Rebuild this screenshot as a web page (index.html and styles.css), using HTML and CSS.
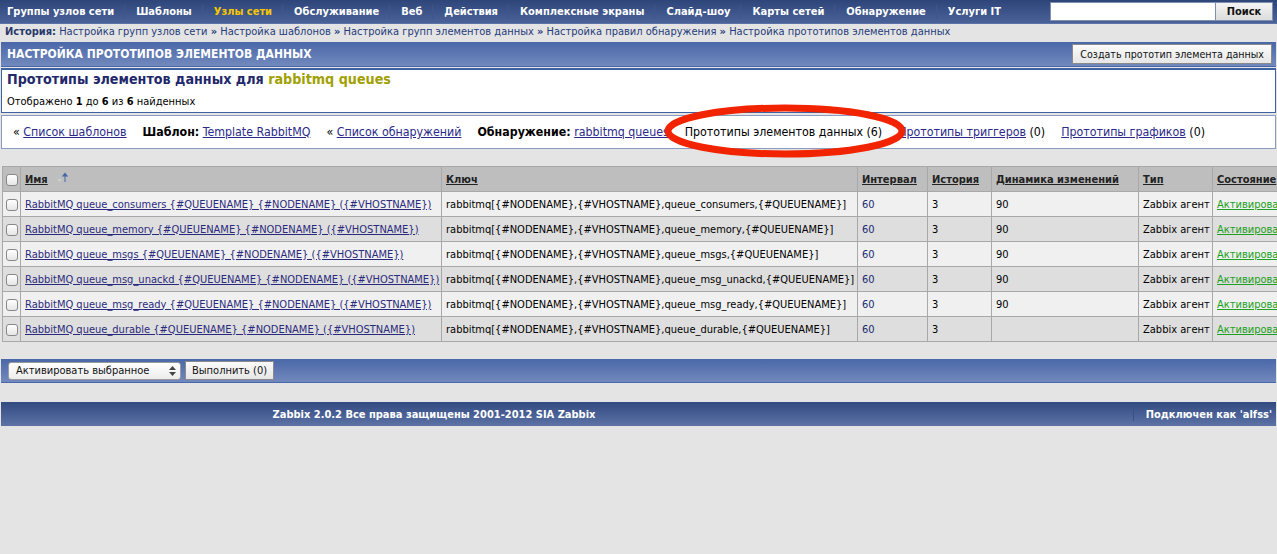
FILE: index.html
```html
<!DOCTYPE html>
<html lang="ru">
<head>
<meta charset="utf-8">
<title>Настройка прототипов элементов данных</title>
<link rel="stylesheet" href="styles.css">
</head>
<body>
<div class="topnav">
  <ul class="menu">
    <li>Группы узлов сети</li>
    <li>Шаблоны</li>
    <li class="sel">Узлы сети</li>
    <li>Обслуживание</li>
    <li>Веб</li>
    <li>Действия</li>
    <li>Комплексные экраны</li>
    <li>Слайд-шоу</li>
    <li>Карты сетей</li>
    <li>Обнаружение</li>
    <li>Услуги IT</li>
  </ul>
  <div class="search"><span class="search-input"></span><span class="search-btn">Поиск</span></div>
</div>
<div class="history"><b>История:</b> <a>Настройка групп узлов сети</a> <span class="rq">»</span> <a>Настройка шаблонов</a> <span class="rq">»</span> <a>Настройка групп элементов данных</a> <span class="rq">»</span> <a>Настройка правил обнаружения</a> <span class="rq">»</span> <a>Настройка прототипов элементов данных</a></div>
<div class="hdr">
  <span class="hdr-title">НАСТРОЙКА ПРОТОТИПОВ ЭЛЕМЕНТОВ ДАННЫХ</span>
  <span class="btn create">Создать прототип элемента данных</span>
</div>
<div class="box titlebox">
  <div class="title">Прототипы элементов данных для <span class="olive">rabbitmq queues</span></div>
  <div class="count">Отображено <b>1</b> до <b>6</b> из <b>6</b> найденных</div>
</div>
<div class="box crumbs">
  <span class="crumb">« <a>Список шаблонов</a></span>
  <span class="crumb"><b>Шаблон:</b> <a>Template RabbitMQ</a></span>
  <span class="crumb">« <a>Список обнаружений</a></span>
  <span class="crumb"><b>Обнаружение:</b> <a>rabbitmq queues</a></span>
  <span class="crumb">Прототипы элементов данных (6)</span>
  <span class="crumb"><a>Прототипы триггеров</a> (0)</span>
  <span class="crumb"><a>Прототипы графиков</a> (0)</span>
</div>
<table class="list">
  <colgroup>
    <col class="c-chk"><col class="c-name"><col class="c-key"><col class="c-int"><col class="c-hist"><col class="c-trend"><col class="c-type"><col class="c-stat">
  </colgroup>
  <thead>
    <tr>
      <th><span class="cb"></span></th>
      <th><a>Имя</a><svg class="sort" width="13" height="13" viewBox="0 0 13 13"><path d="M3.5 12.5V8H1.5L3.5 11L5.5 8H3.5" fill="#d0d0d0"/><path d="M8.5 11V5.5H5.8L9 1.5L12.2 5.5H9.5V11Z" fill="#4866a6"/></svg></th>
      <th><a>Ключ</a></th>
      <th><a>Интервал</a></th>
      <th><a>История</a></th>
      <th><a>Динамика изменений</a></th>
      <th><a>Тип</a></th>
      <th><a>Состояние</a></th>
    </tr>
  </thead>
  <tbody>
    <tr class="odd"><td><span class="cb"></span></td><td><a>RabbitMQ queue_consumers {#QUEUENAME} {#NODENAME} ({#VHOSTNAME})</a></td><td>rabbitmq[{#NODENAME},{#VHOSTNAME},queue_consumers,{#QUEUENAME}]</td><td class="n">60</td><td>3</td><td>90</td><td>Zabbix агент</td><td><a class="on">Активировано</a></td></tr>
    <tr class="even"><td><span class="cb"></span></td><td><a>RabbitMQ queue_memory {#QUEUENAME} {#NODENAME} ({#VHOSTNAME})</a></td><td>rabbitmq[{#NODENAME},{#VHOSTNAME},queue_memory,{#QUEUENAME}]</td><td class="n">60</td><td>3</td><td>90</td><td>Zabbix агент</td><td><a class="on">Активировано</a></td></tr>
    <tr class="odd"><td><span class="cb"></span></td><td><a>RabbitMQ queue_msgs {#QUEUENAME} {#NODENAME} ({#VHOSTNAME})</a></td><td>rabbitmq[{#NODENAME},{#VHOSTNAME},queue_msgs,{#QUEUENAME}]</td><td class="n">60</td><td>3</td><td>90</td><td>Zabbix агент</td><td><a class="on">Активировано</a></td></tr>
    <tr class="even"><td><span class="cb"></span></td><td><a>RabbitMQ queue_msg_unackd {#QUEUENAME} {#NODENAME} ({#VHOSTNAME})</a></td><td>rabbitmq[{#NODENAME},{#VHOSTNAME},queue_msg_unackd,{#QUEUENAME}]</td><td class="n">60</td><td>3</td><td>90</td><td>Zabbix агент</td><td><a class="on">Активировано</a></td></tr>
    <tr class="odd"><td><span class="cb"></span></td><td><a>RabbitMQ queue_msg_ready {#QUEUENAME} {#NODENAME} ({#VHOSTNAME})</a></td><td>rabbitmq[{#NODENAME},{#VHOSTNAME},queue_msg_ready,{#QUEUENAME}]</td><td class="n">60</td><td>3</td><td>90</td><td>Zabbix агент</td><td><a class="on">Активировано</a></td></tr>
    <tr class="even"><td><span class="cb"></span></td><td><a>RabbitMQ queue_durable {#QUEUENAME} {#NODENAME} ({#VHOSTNAME})</a></td><td>rabbitmq[{#NODENAME},{#VHOSTNAME},queue_durable,{#QUEUENAME}]</td><td class="n">60</td><td>3</td><td></td><td>Zabbix агент</td><td><a class="on">Активировано</a></td></tr>
  </tbody>
</table>
<div class="actions">
  <span class="select">Активировать выбранное<svg class="updown" width="7" height="10" viewBox="0 0 7 10"><path d="M3.5 0L7 4H0Z M3.5 10L0 6H7Z" fill="#444"/></svg></span>
  <span class="btn go">Выполнить (0)</span>
</div>
<div class="footer">
  <span class="foot-main">Zabbix 2.0.2 Все права защищены 2001-2012 SIA Zabbix</span>
  <span class="foot-user">Подключен как 'alfss'</span>
</div>
<svg class="annot" width="252" height="60" viewBox="0 0 252 60"><ellipse cx="126" cy="30" rx="117" ry="23" fill="none" stroke="#f22400" stroke-width="7"/></svg>
</body>
</html>
```

FILE: styles.css
```css
html, body {
  margin: 0;
  padding: 0;
  overflow: hidden;
}
body {
  background: #e4e4e4;
  font-family: "DejaVu Sans Condensed", "DejaVu Sans", sans-serif;
  font-size: 11px;
  color: #000;
  position: relative;
  width: 1277px;
  height: 554px;
}
a { text-decoration: underline; cursor: pointer; }

.topnav {
  height: 24px;
  display: flex;
  align-items: center;
  justify-content: space-between;
  background: linear-gradient(#2d4579, #4a6298);
  border-bottom: 1px solid #5a72a8;
  box-sizing: border-box;
}
.menu {
  list-style: none;
  margin: 0;
  padding: 0;
  display: flex;
}
.menu li {
  color: #fff;
  font-weight: bold;
  font-size: 11px;
  padding: 0 10px 0 7px;
  margin-right: 4px;
  border-right: 1px solid #3f5688;
  line-height: 14px;
}
.menu li:last-child { border-right: none; }
.menu li.sel { color: #f6c700; }
.search {
  display: flex;
  margin-right: 4px;
}
.search-input {
  width: 164px;
  height: 17px;
  background: #fff;
  border: 1px solid #7f8fb0;
}
.search-btn {
  width: 56px;
  height: 17px;
  line-height: 17px;
  text-align: center;
  font-weight: bold;
  background: linear-gradient(#f4f4f4, #dcdcdc);
  border: 1px solid #7f8fb0;
  border-left: none;
  color: #111;
}

.history {
  height: 16px;
  line-height: 16px;
  padding: 0 5px;
  background: #e4e4e4;
  color: #2b3a6a;
}
.history b { color: #27386b; }
.history a { color: #243b7a; text-decoration: none; }
.history .rq { color: #243b7a; font-weight: bold; }

.hdr {
  margin: 2px 1px 0 1px;
  height: 24px;
  display: flex;
  align-items: center;
  justify-content: space-between;
  padding: 0 4px 0 6px;
  background: linear-gradient(#4a67a8, #7189bd);
  border-bottom: 1px solid #4a67a8;
}
.hdr-title {
  color: #fff;
  font-weight: bold;
  font-size: 12px;
}
.btn {
  display: inline-block;
  height: 18px;
  line-height: 18px;
  padding: 0 6px;
  background: linear-gradient(#fbfbfb, #e6e6e6);
  border: 1px solid #8a8a8a;
  color: #111;
  font-size: 11px;
}
.create {
  font-size: 10.6px;
  padding: 0 7px;
}

.box {
  background: #fff;
  margin: 1px 1px 0 1px;
}
.titlebox {
  border: 1px solid #3c63a3;
  border-top: 2px solid #3c63a3;
  height: 42px;
  padding: 0 5px;
}
.title {
  font-size: 14.2px;
  font-weight: bold;
  color: #22286a;
  margin-top: 0;
  line-height: 18px;
}
.olive { color: #a0a000; }
.count {
  margin-top: 7px;
  line-height: 14px;
}
.crumbs {
  margin-top: 2px;
  border: 1px solid #8b9cc0;
  height: 32px;
  display: flex;
  align-items: center;
  padding: 0 11px 0 11px;
  gap: 16px;
  color: #000;
  font-size: 12.3px;
}
.crumbs a { color: #2a2a8a; }

.list {
  margin: 17px 0 0 2px;
  border-collapse: collapse;
  table-layout: fixed;
  width: 1292px;
  white-space: nowrap;
}
.c-chk { width: 18px; }
.c-name { width: 421px; }
.c-key { width: 416px; }
.c-int { width: 70px; }
.c-hist { width: 64px; }
.c-trend { width: 147px; }
.c-type { width: 74px; }
.c-stat { width: 82px; }
.list th, .list td {
  border: 1px solid #a8a8a8;
  height: 24px;
  padding: 0 4px;
  text-align: left;
  overflow: hidden;
}
.list th {
  background: #bebebe;
  font-weight: bold;
}
.list th a { color: #222; }
.list th:first-child, .list td:first-child { padding: 0 3px; }
.list tr.odd td { background: #f0f0f0; }
.list tr.even td { background: #dedede; }
.list td a { color: #2a2a7c; }
.list td a.on { color: #20a020; }
.list td.n { color: #1a2a70; }
.sort {
  vertical-align: top;
  margin-left: 8px;
  margin-top: -2px;
}
.cb {
  display: inline-block;
  width: 10px;
  height: 10px;
  border: 1px solid #888;
  border-radius: 3px;
  background: linear-gradient(#fff, #e6e6e6);
  vertical-align: middle;
}

.actions {
  margin: 17px 1px 0 1px;
  height: 23px;
  display: flex;
  align-items: center;
  gap: 4px;
  padding: 0 7px;
  background: linear-gradient(#4a67a8, #7189bd);
  border-bottom: 1px solid #4a67a8;
}
.select {
  width: 160px;
  height: 16px;
  line-height: 16px;
  padding: 0 4px 0 7px;
  background: linear-gradient(#fff, #ececec);
  border: 1px solid #9a9a9a;
  border-radius: 3px;
  display: flex;
  align-items: center;
  justify-content: space-between;
  color: #111;
}
.go {
  height: 17px;
  line-height: 17px;
}

.footer {
  margin: 19px 1px 0 1px;
  height: 24px;
  display: flex;
  align-items: center;
  background: linear-gradient(#314a81, #5d73a6);
  color: #fff;
  font-weight: bold;
}
.foot-main {
  width: 866px;
  text-align: center;
}
.foot-user {
  margin-left: auto;
  padding: 0 4px 0 12px;
  border-left: 1px solid #3d5185;
}

.annot {
  position: absolute;
  left: 659px;
  top: 101px;
}
```
